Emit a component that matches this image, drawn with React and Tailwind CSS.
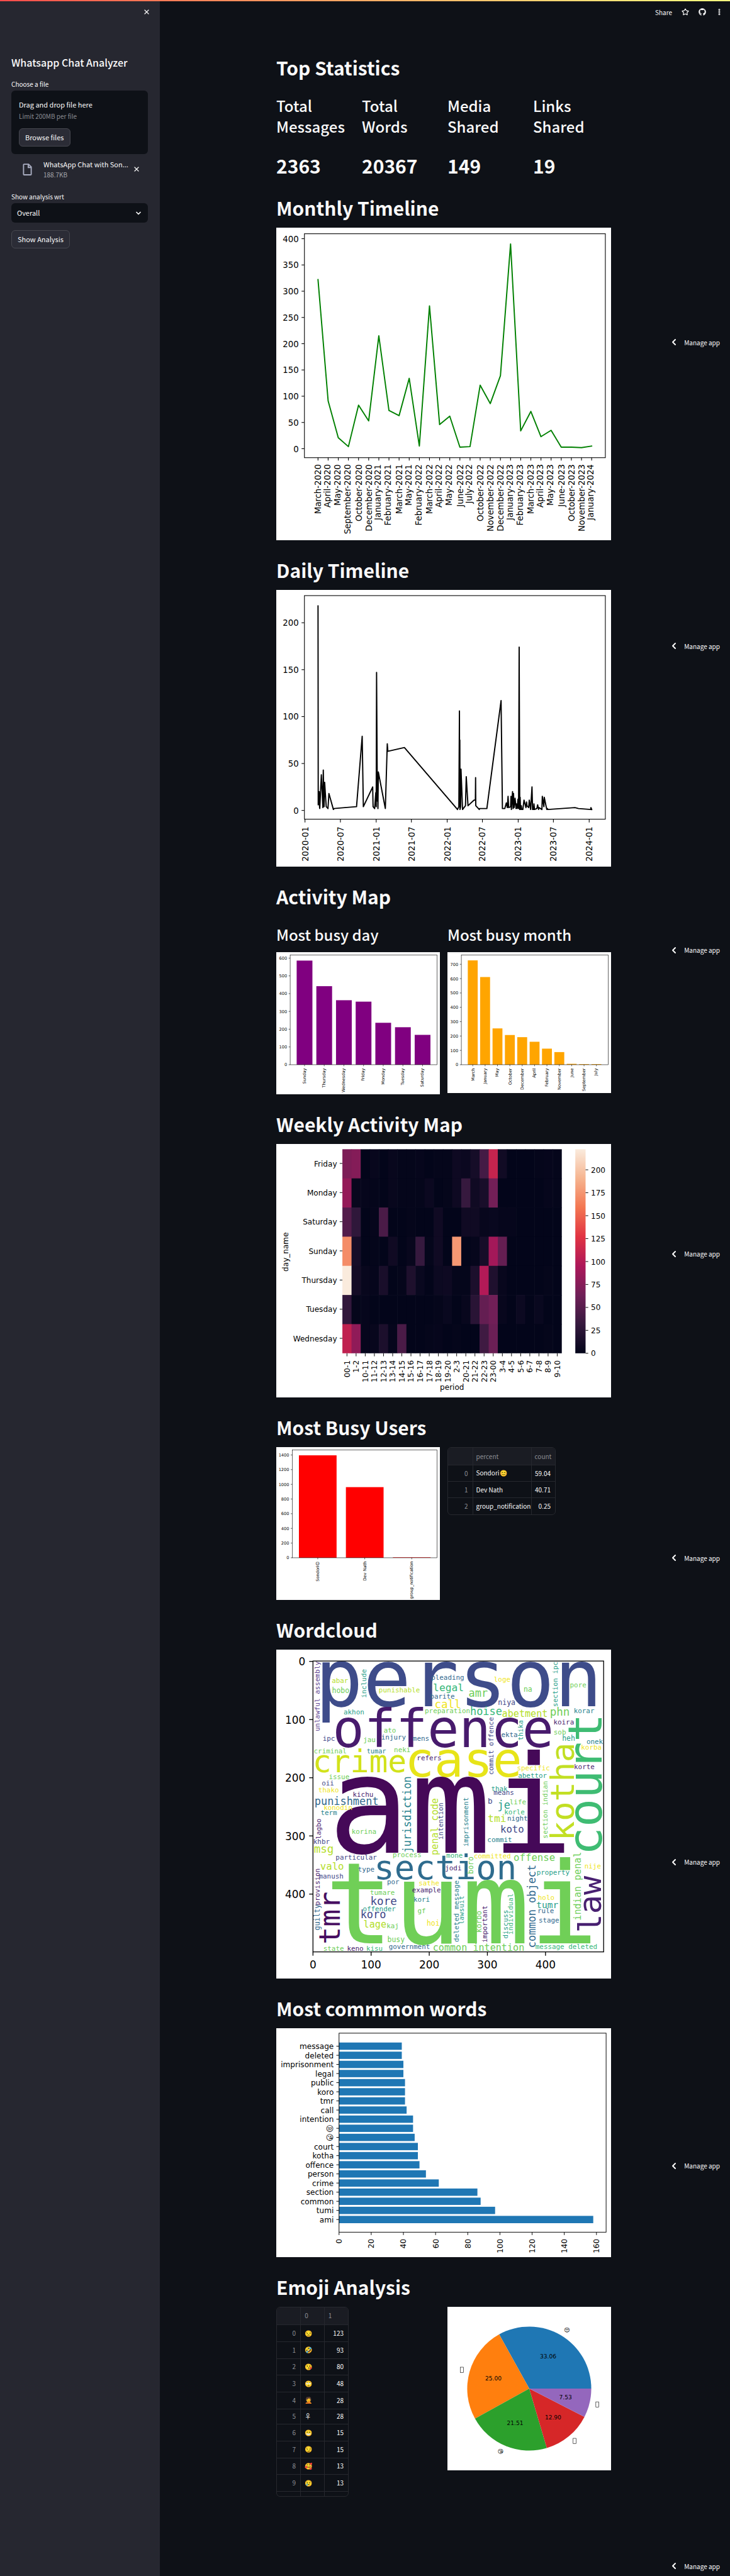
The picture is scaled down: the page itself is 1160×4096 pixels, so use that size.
import { X, Star, ChevronDown, ChevronLeft, EllipsisVertical } from "lucide-react";
import { FaGithub } from "react-icons/fa";

const hasDescender = (s) => /[gjpqy_]/.test(String(s));

function Figure({ label, width, height, children }) {
  return (
    <svg
      role="img"
      aria-label={label}
      viewBox={`0 0 ${width} ${height}`}
      className="block h-auto w-full bg-white font-['DejaVu_Sans',sans-serif]"
    >
      {children}
    </svg>
  );
}

function Frame({ box, w }) {
  return (
    <rect
      x={box.l}
      y={box.t}
      width={box.r - box.l}
      height={box.b - box.t}
      fill="none"
      stroke="#000"
      strokeWidth={w}
    />
  );
}

/* items: [position, text] */
function YTicks({ x, items, len, size, w }) {
  return items.map(([y, text], i) => (
    <g key={i}>
      <path d={`M${x} ${y}h${-len}`} stroke="#000" strokeWidth={w} />
      <text x={x - len * 2} y={y + size * 0.38} fontSize={size} textAnchor="end">
        {text}
      </text>
    </g>
  ));
}

function XTicks({ y, items, len, size, w }) {
  return items.map(([x, text], i) => (
    <g key={i}>
      <path d={`M${x} ${y}v${len}`} stroke="#000" strokeWidth={w} />
      <text
        transform={`translate(${x + size * (hasDescender(text) ? 0.25 : 0.37)} ${y + len * 2.3}) rotate(-90)`}
        fontSize={size}
        textAnchor="end"
      >
        {text}
      </text>
    </g>
  ));
}

const monthly = [
  ["March-2020", 322], ["April-2020", 91], ["May-2020", 21], ["September-2020", 4],
  ["October-2020", 83], ["December-2020", 53], ["January-2021", 215], ["February-2021", 73],
  ["March-2021", 63], ["May-2021", 134], ["February-2022", 5], ["March-2022", 272],
  ["April-2022", 46], ["May-2022", 62], ["June-2022", 3], ["July-2022", 4],
  ["October-2022", 121], ["November-2022", 86], ["December-2022", 139], ["January-2023", 390],
  ["February-2023", 34], ["March-2023", 71], ["April-2023", 23], ["May-2023", 35],
  ["June-2023", 3], ["October-2023", 3], ["November-2023", 2], ["January-2024", 5],
];

function MonthlyChart() {
  const box = { l: 74, r: 865, t: 16, b: 605 };
  const px = (i) => 109.7 + i * 26.64;
  const py = (v) => 581.4 - v * 1.381;
  return (
    <Figure label="Monthly timeline" width={880} height={822}>
      <polyline
        points={monthly.map(([, v], i) => `${px(i)},${py(v)}`).join(" ")}
        fill="none"
        stroke="#008000"
        strokeWidth={3.2}
        strokeLinejoin="round"
        strokeLinecap="square"
      />
      <Frame box={box} w={1.8} />
      <YTicks x={box.l} items={[0, 50, 100, 150, 200, 250, 300, 350, 400].map((v) => [py(v), v])} len={7.5} size={22} w={1.8} />
      <XTicks y={box.b} items={monthly.map(([m], i) => [px(i), m])} len={7.5} size={22} w={1.8} />
    </Figure>
  );
}

/* [days since 2020-01-01, messages] */
const daily = [
  [67, 218], [68, 6], [73, 20], [75, 3], [76, 2], [84, 38], [92, 3], [94, 43], [98, 4], [101, 30],
  [109, 4], [114, 3], [118, 2], [123, 18], [146, 1], [149, 2], [205, 3], [265, 4], [294, 79], [300, 4],
  [348, 25], [350, 4], [358, 2], [364, 19], [366, 4], [368, 147], [372, 10], [373, 30], [375, 2],
  [377, 41], [413, 2], [423, 71], [426, 63], [511, 67], [780, 2], [784, 1], [791, 4], [794, 106],
  [795, 5], [796, 75], [797, 1], [800, 4], [802, 44], [810, 1], [825, 5], [829, 36], [838, 5],
  [869, 11], [876, 11], [877, 35], [878, 5], [896, 1], [897, 2], [935, 2], [1008, 117], [1015, 2],
  [1027, 2], [1035, 8], [1040, 3], [1044, 15], [1047, 3], [1057, 4], [1059, 15], [1061, 1], [1067, 20],
  [1070, 2], [1072, 18], [1075, 3], [1080, 13], [1085, 2], [1087, 7], [1091, 2], [1095, 12],
  [1098, 2], [1101, 174], [1104, 1], [1106, 14], [1108, 1], [1112, 5], [1114, 1], [1120, 1],
  [1126, 11], [1136, 3], [1139, 9], [1141, 5], [1150, 3], [1153, 11], [1160, 1], [1167, 25],
  [1170, 1], [1175, 1], [1177, 7], [1180, 1], [1192, 2], [1196, 6], [1201, 1], [1203, 3], [1218, 1],
  [1220, 15], [1228, 4], [1230, 14], [1243, 1], [1246, 2], [1249, 1], [1388, 3], [1406, 2],
  [1469, 1], [1470, 3], [1474, 1],
];

function DailyChart() {
  const box = { l: 74, r: 865, t: 15, b: 603 };
  const px = (d) => 75.5 + d * 0.5113;
  const py = (v) => 580 - v * 2.468;
  const dates = [
    [0, "2020-01"], [182, "2020-07"], [366, "2021-01"], [547, "2021-07"], [731, "2022-01"],
    [912, "2022-07"], [1096, "2023-01"], [1277, "2023-07"], [1461, "2024-01"],
  ];
  return (
    <Figure label="Daily timeline" width={880} height={728}>
      <polyline
        points={daily.map(([d, v]) => `${px(d)},${py(v)}`).join(" ")}
        fill="none"
        stroke="#000"
        strokeWidth={3.2}
        strokeLinejoin="round"
        strokeLinecap="square"
      />
      <Frame box={box} w={1.8} />
      <YTicks x={box.l} items={[0, 50, 100, 150, 200].map((v) => [py(v), v])} len={7.5} size={22} w={1.8} />
      <XTicks y={box.b} items={dates.map(([d, t]) => [px(d), t])} len={8.5} size={22} w={1.8} />
    </Figure>
  );
}

function BarChart({ label, height, box, color, data, start, pitch, barWidth, unit, ticks }) {
  const cx = (i) => start + i * pitch;
  return (
    <Figure label={label} width={430} height={height}>
      {data.map(([name, v], i) => (
        <rect key={name} x={cx(i) - barWidth / 2} y={box.b - v * unit} width={barWidth} height={v * unit} fill={color} />
      ))}
      <Frame box={box} w={1} />
      <YTicks x={box.l} items={ticks.map((v) => [box.b - v * unit, v])} len={4} size={11} w={1} />
      <XTicks y={box.b} items={data.map(([name], i) => [cx(i), name])} len={4} size={11} w={1} />
    </Figure>
  );
}

const hundreds = [0, 100, 200, 300, 400, 500, 600];

const DayChart = () => (
  <BarChart
    label="Most busy day"
    height={374}
    box={{ l: 36.5, r: 422.5, t: 7.5, b: 296 }}
    color="#800080"
    start={74.3}
    pitch={51.7}
    barWidth={41.4}
    unit={0.4673}
    ticks={hundreds}
    data={[
      ["Sunday", 586], ["Thursday", 442], ["Wednesday", 363], ["Friday", 355],
      ["Monday", 236], ["Tuesday", 211], ["Saturday", 168],
    ]}
  />
);

const MonthChart = () => (
  <BarChart
    label="Most busy month"
    height={371}
    box={{ l: 36.5, r: 422.5, t: 7.5, b: 296 }}
    color="#ffa500"
    start={66.5}
    pitch={32.5}
    barWidth={26}
    unit={0.3774}
    ticks={[...hundreds, 700]}
    data={[
      ["March", 727], ["January", 611], ["May", 253], ["October", 207], ["December", 192],
      ["April", 160], ["February", 112], ["November", 88], ["June", 6], ["September", 4], ["July", 4],
    ]}
  />
);

const UserChart = () => (
  <BarChart
    label="Most busy users"
    height={402}
    box={{ l: 42, r: 422.5, t: 7.5, b: 291 }}
    color="#ff0000"
    start={109}
    pitch={123.5}
    barWidth={99}
    unit={0.1931}
    ticks={[0, 200, 400, 600, 800, 1000, 1200, 1400]}
    data={[["Sondori😊", 1395], ["Dev Nath", 962], ["group_notification", 6]]}
  />
);

const rocket = [
  [3, 5, 26], [53, 25, 62], [112, 31, 87], [173, 23, 89],
  [225, 51, 66], [243, 118, 81], [246, 180, 143], [250, 235, 221],
];

function rocketColor(v) {
  const t = Math.min(v / 222, 1) * 7;
  const i = Math.min(Math.floor(t), 6);
  const mix = rocket[i].map((c, k) => Math.round(c + (rocket[i + 1][k] - c) * (t - i)));
  return `rgb(${mix.join(",")})`;
}

const periods = [
  "00-1", "1-2", "10-11", "11-12", "12-13", "13-14", "14-15", "15-16", "16-17", "17-18", "18-19",
  "19-20", "2-3", "20-21", "21-22", "22-23", "23-00", "3-4", "4-5", "5-6", "6-7", "7-8", "8-9", "9-10",
];

const heat = [
  ["Friday", [70, 74, 0, 3, 0, 3, 1, 1, 2, 0, 1, 1, 7, 5, 12, 40, 110, 9, 0, 0, 0, 1, 2, 1]],
  ["Monday", [82, 3, 2, 1, 0, 3, 1, 1, 1, 5, 0, 1, 7, 32, 8, 14, 65, 0, 0, 0, 0, 0, 2, 1]],
  ["Saturday", [48, 28, 0, 2, 43, 0, 0, 1, 0, 0, 8, 0, 0, 8, 8, 3, 4, 2, 2, 0, 0, 0, 0, 0]],
  ["Sunday", [170, 12, 0, 1, 0, 8, 0, 3, 32, 1, 8, 0, 176, 0, 2, 12, 90, 57, 0, 0, 0, 0, 0, 0]],
  ["Thursday", [222, 10, 3, 2, 14, 0, 1, 17, 4, 0, 6, 7, 1, 1, 16, 98, 18, 3, 0, 0, 0, 0, 1, 0]],
  ["Tuesday", [30, 1, 2, 0, 0, 0, 0, 0, 0, 0, 1, 4, 0, 3, 24, 57, 64, 3, 0, 6, 0, 4, 0, 0]],
  ["Wednesday", [107, 80, 2, 3, 16, 2, 43, 0, 0, 1, 2, 0, 1, 0, 0, 37, 61, 0, 0, 0, 0, 0, 1, 0]],
];

function HeatMap() {
  const cw = 24.03;
  const ch = 76.67;
  const left = 173.8;
  const top = 13.8;
  const bottom = 550.5;
  return (
    <Figure label="Weekly activity heat map" width={880} height={666}>
      <defs>
        <linearGradient id="rocket" x1="0" y1="1" x2="0" y2="0">
          {rocket.map((c, i) => (
            <stop key={i} offset={i / 7} stopColor={`rgb(${c.join(",")})`} />
          ))}
        </linearGradient>
      </defs>
      {heat.map(([day, row], r) =>
        row.map((v, c) => (
          <rect
            key={day + c}
            x={left + c * cw}
            y={top + r * ch}
            width={cw + (c < 23 ? 1 : 0)}
            height={ch + (r < 6 ? 1 : 0)}
            fill={rocketColor(v)}
          />
        ))
      )}
      <rect x={786} y={top} width={27} height={bottom - top} fill="url(#rocket)" />
      <YTicks x={left} items={heat.map(([day], r) => [top + (r + 0.5) * ch - 1, day])} len={7} size={20} w={1.6} />
      <XTicks y={bottom} items={periods.map((p, c) => [left + (c + 0.5) * cw, p])} len={8} size={20} w={1.6} />
      {[0, 25, 50, 75, 100, 125, 150, 175, 200].map((v) => (
        <g key={v}>
          <path d={`M813 ${bottom - v * 2.413}h7`} stroke="#000" strokeWidth={1.6} />
          <text x={827} y={bottom - v * 2.413 + 7.6} fontSize={20}>{v}</text>
        </g>
      ))}
      <text x={462} y={647} fontSize={20} textAnchor="middle">period</text>
      <text transform="translate(31 284) rotate(-90)" fontSize={20} textAnchor="middle">day_name</text>
    </Figure>
  );
}

const NAVY = "#404688";
const PLUM = "#481b6d";
const BLUE = "#31688e";
const SEA = "#26828e";
const TEAL = "#1f9e89";
const GREEN = "#35b779";
const LEAF = "#6ece58";
const LIME = "#b5de2b";
const GOLD = "#efe51c";

/* [text, ink start x, baseline y, ink end x, colour] */
const acrossWords = [
  ["person", 247, 377, 1450, "#3e4c8a"],
  ["offence", 306, 552, 1246, "#481b6d"],
  ["crime", 217, 662, 607, "#d2e21b"],
  ["case", 628, 679, 1108, "#e7e419"],
  ["ami", 308, 1008, 1310, "#450958"],
  ["section", 487, 1119, 1090, "#2f6c8e"],
  ["tumi", 289, 1395, 1423, "#70cf57"],
  ["abar", 290, 278, 359, LIME],
  ["hobo", 292, 320, 364, LEAF],
  ["punishable", 497, 318, 675, LIME],
  ["pleading", 727, 264, 868, BLUE],
  ["legal", 735, 312, 867, GREEN],
  ["barite", 722, 345, 828, BLUE],
  ["call", 743, 385, 851, GOLD],
  ["preparation", 699, 408, 893, LEAF],
  ["amr", 891, 338, 970, LEAF],
  ["loge", 1001, 273, 1069, GOLD],
  ["niya", 1020, 373, 1090, NAVY],
  ["na", 1132, 315, 1166, LEAF],
  ["pore", 1335, 296, 1404, LEAF],
  ["korar", 1352, 406, 1439, SEA],
  ["phn", 1249, 417, 1328, LEAF],
  ["abetment", 1037, 422, 1235, LIME],
  ["hoise", 899, 415, 1034, GREEN],
  ["akhon", 342, 412, 429, TEAL],
  ["ato", 518, 490, 569, LEAF],
  ["injury", 508, 521, 612, BLUE],
  ["mens", 646, 527, 714, BLUE],
  ["ipc", 251, 525, 300, NAVY],
  ["jau", 428, 532, 478, LEAF],
  ["ekta", 1034, 509, 1103, BLUE],
  ["koira", 1263, 455, 1350, PLUM],
  ["sob", 1264, 499, 1314, LEAF],
  ["heh", 1301, 527, 1353, TEAL],
  ["onek", 1407, 540, 1476, SEA],
  ["korba", 1384, 564, 1470, GOLD],
  ["korte", 1353, 647, 1440, PLUM],
  ["criminal", 212, 580, 352, LEAF],
  ["tumar", 443, 580, 527, SEA],
  ["neki", 564, 575, 633, LEAF],
  ["refers", 664, 610, 768, PLUM],
  ["specific", 1103, 652, 1243, GOLD],
  ["abettor", 1107, 686, 1229, TEAL],
  ["issue", 278, 690, 365, LEAF],
  ["oii", 246, 717, 296, NAVY],
  ["thako", 231, 748, 317, GOLD],
  ["kichu", 383, 767, 470, PLUM],
  ["punishment", 217, 801, 493, BLUE],
  ["konodin", 255, 822, 379, GOLD],
  ["term", 241, 845, 311, SEA],
  ["thak", 989, 743, 1057, TEAL],
  ["means", 1000, 757, 1087, NAVY],
  ["b", 975, 795, 991, NAVY],
  ["je", 1018, 817, 1068, TEAL],
  ["life", 1070, 800, 1139, LEAF],
  ["korle", 1047, 842, 1134, GREEN],
  ["night", 1060, 870, 1146, BLUE],
  ["tmi", 975, 875, 1051, LIME],
  ["koto", 1031, 921, 1129, NAVY],
  ["commit", 973, 960, 1078, SEA],
  ["korina", 378, 927, 482, LEAF],
  ["khbr", 210, 970, 277, NAVY],
  ["msg", 214, 1006, 295, LIME],
  ["particular", 308, 1036, 484, NAVY],
  ["process", 558, 1026, 681, LEAF],
  ["mone", 793, 1028, 862, GREEN],
  ["committed", 914, 1030, 1073, GOLD],
  ["offense", 1088, 1041, 1263, LEAF],
  ["valo", 240, 1081, 338, LIME],
  ["type", 405, 1089, 473, BLUE],
  ["manush", 234, 1118, 340, NAVY],
  ["jodi", 787, 1083, 856, PLUM],
  ["por", 533, 1141, 583, BLUE],
  ["property", 1189, 1101, 1330, TEAL],
  ["nije", 1399, 1073, 1468, GOLD],
  ["sathe", 672, 1146, 759, GOLD],
  ["example", 643, 1178, 766, PLUM],
  ["tumare", 458, 1188, 562, LEAF],
  ["kore", 462, 1232, 570, NAVY],
  ["kori", 649, 1218, 717, SEA],
  ["holo", 1195, 1210, 1264, GOLD],
  ["tumr", 1188, 1245, 1280, TEAL],
  ["offender", 426, 1258, 566, TEAL],
  ["koro", 418, 1288, 525, NAVY],
  ["gf", 667, 1266, 699, LEAF],
  ["rule", 1193, 1267, 1262, BLUE],
  ["stage", 1198, 1308, 1284, BLUE],
  ["lage", 430, 1327, 526, LIME],
  ["kaj", 531, 1331, 580, LEAF],
  ["hoi", 707, 1319, 758, GOLD],
  ["busy", 535, 1391, 605, LEAF],
  ["state", 254, 1428, 340, LEAF],
  ["keno", 358, 1428, 427, PLUM],
  ["kisu", 442, 1428, 511, GREEN],
  ["government", 541, 1421, 717, BLUE],
  ["common intention", 735, 1427, 1138, LEAF],
  ["message deleted", 1184, 1420, 1450, GREEN],
];

/* [text, baseline x, ink bottom y, ink top y, colour] */
const upWords = [
  ["unlawful assembly", 234, 482, 187, "#5b3f8f"],
  ["include", 440, 339, 218, TEAL],
  ["section ipc", 1277, 377, 187, TEAL],
  ["thika", 1126, 523, 438, TEAL],
  ["commit offence", 998, 669, 425, NAVY],
  ["kotha", 1349, 943, 543, "#c2df23"],
  ["court", 1472, 1000, 422, "#3fbc73"],
  ["jurisdiction", 635, 1005, 683, SEA],
  ["penal code", 753, 1014, 770, LIME],
  ["intention", 776, 948, 793, NAVY],
  ["imprisonment", 887, 978, 771, SEA],
  ["section indian", 1234, 943, 700, LEAF],
  ["lagbo", 241, 947, 861, PLUM],
  ["boro", 910, 1095, 1025, LEAF],
  ["indian penal", 1380, 1294, 1003, LEAF],
  ["law", 1469, 1343, 1114, "#482071"],
  ["common object", 1183, 1411, 1060, BLUE],
  ["provision", 234, 1230, 1074, PLUM],
  ["guilty", 234, 1337, 1232, BLUE],
  ["tmr", 325, 1393, 1182, "#470e61"],
  ["deleted message", 844, 1388, 1130, SEA],
  ["lawsuit", 866, 1313, 1194, TEAL],
  ["korbo", 945, 1347, 1260, LEAF],
  ["important", 970, 1390, 1237, PLUM],
  ["discuss", 1060, 1373, 1254, TEAL],
  ["individual", 1083, 1356, 1186, GREEN],
];

const cloudX = (x) => (x - 45) * 0.5995;
const cloudY = (y) => (y - 134) * 0.6122;
const bearing = (text) => (/^[aotlfjv]/.test(text) ? 0.06 : 0.09);
const monoSize = (text, extent) => Math.round(extent / (text.length * 0.602 - bearing(text) - 0.065));

function WordCloud() {
  const box = { l: 96.5, r: 860.5, t: 30, b: 795 };
  const ticks = [0, 100, 200, 300, 400];
  return (
    <Figure label="Word cloud" width={880} height={865}>
      <g className="font-['DejaVu_Sans_Mono',monospace]">
        {acrossWords.map(([text, x0, y, x1, fill]) => {
          const size = monoSize(text, (x1 - x0) * 0.5995);
          return (
            <text key={text} x={cloudX(x0) - size * bearing(text)} y={cloudY(y)} fontSize={size} fill={fill}>
              {text}
            </text>
          );
        })}
        {upWords.map(([text, x, y0, y1, fill]) => {
          const size = monoSize(text, (y0 - y1) * 0.6122);
          return (
            <text
              key={text}
              transform={`translate(${cloudX(x)} ${cloudY(y0) + size * bearing(text)}) rotate(-90)`}
              fontSize={size}
              fill={fill}
            >
              {text}
            </text>
          );
        })}
      </g>
      <Frame box={box} w={2.2} />
      <YTicks x={box.l} items={ticks.map((v) => [box.t + v * 1.53 + 1, v])} len={10} size={28} w={2.2} />
      {ticks.map((v) => (
        <g key={v}>
          <path d={`M${box.l + v * 1.528} ${box.b}v10`} stroke="#000" strokeWidth={2.2} />
          <text x={box.l + v * 1.528} y={839} fontSize={28} textAnchor="middle">{v}</text>
        </g>
      ))}
    </Figure>
  );
}

const words = [
  ["message", 39], ["deleted", 39], ["imprisonment", 40], ["legal", 40], ["public", 41], ["koro", 41],
  ["tmr", 41], ["call", 42], ["intention", 46], ["😒", 46], ["😘", 47], ["court", 49], ["kotha", 49],
  ["offence", 50], ["person", 54], ["crime", 62], ["section", 86], ["common", 88], ["tumi", 97], ["ami", 158],
];

function WordsChart() {
  const box = { l: 165, r: 867, t: 13, b: 536.5 };
  const cy = (i) => 47.2 + i * 24;
  return (
    <Figure label="Most common words" width={880} height={602}>
      {words.map(([w, v], i) => (
        <rect key={w} x={box.l} y={cy(i) - 9.6} width={v * 4.229} height={19.2} fill="#1f77b4" />
      ))}
      <Frame box={box} w={1.6} />
      <YTicks x={box.l} items={words.map(([w], i) => [cy(i), w])} len={7} size={20} w={1.6} />
      <XTicks y={box.b} items={[0, 20, 40, 60, 80, 100, 120, 140, 160].map((v) => [box.l + v * 4.229, v])} len={7.5} size={20} w={1.6} />
    </Figure>
  );
}

const slices = [
  [123, "33.06", "#1f77b4", "😒"],
  [93, "25.00", "#ff7f0e", null],
  [80, "21.51", "#2ca02c", "😘"],
  [48, "12.90", "#d62728", null],
  [28, "7.53", "#9467bd", null],
];

function PieChart() {
  const cx = 215;
  const cy = 215;
  const at = (f, r) => [cx + r * Math.cos(f * 2 * Math.PI), cy - r * Math.sin(f * 2 * Math.PI)];
  let sum = 0;
  return (
    <Figure label="Emoji shares" width={430} height={430}>
      {slices.map(([n, pct, fill, glyph]) => {
        const a = sum / 372;
        sum += n;
        const b = sum / 372;
        const mid = (a + b) / 2;
        const [x0, y0] = at(a, 163);
        const [x1, y1] = at(b, 163);
        const [tx, ty] = at(mid, 98);
        const [lx, ly] = at(mid, 179);
        const right = Math.cos(mid * 2 * Math.PI) > 0;
        return (
          <g key={pct}>
            <path d={`M${cx} ${cy}L${x0} ${y0}A163 163 0 0 0 ${x1} ${y1}Z`} fill={fill} />
            <text x={tx} y={ty + 5.5} fontSize={15} textAnchor="middle">{pct}</text>
            {glyph ? (
              <text x={lx} y={ly + 5.5} fontSize={15} textAnchor={right ? "start" : "end"}>{glyph}</text>
            ) : (
              <rect x={right ? lx + 1 : lx - 9} y={ly - 7} width={8} height={14} fill="none" stroke="#000" strokeWidth={1} />
            )}
          </g>
        );
      })}
    </Figure>
  );
}

function Title({ children }) {
  return <h1 className="mt-[27px] mb-3 text-[30px]/[40px] font-bold">{children}</h1>;
}

function Stat({ name, value }) {
  return (
    <div>
      <h2 className="text-2xl/[33px] font-medium">{name}</h2>
      <p className="mt-[26px] text-[30px]/[40px] font-bold">{value}</p>
    </div>
  );
}

function ManageApp() {
  return (
    <button type="button" className="flex h-8 items-center gap-2 bg-[#0e1117] pr-4 pl-3 text-[10px]">
      <ChevronLeft className="size-4" strokeWidth={3} />
      Manage app
    </button>
  );
}

function Sidebar() {
  return (
    <aside className="w-[254px] shrink-0 bg-[#262730] pr-[19px] pl-[18px]">
      <div className="flex h-[34px] items-center justify-end">
        <button type="button" aria-label="Close sidebar" className="-mr-1">
          <X className="size-3" strokeWidth={2.4} />
        </button>
      </div>
      <h1 className="mt-[52px] text-base/[22px] font-medium">Whatsapp Chat Analyzer</h1>

      <div className="mt-[14px]">
        <label htmlFor="chat-file" className="block text-[10px]/[20px]">Choose a file</label>
        <input id="chat-file" type="file" className="sr-only" />
        <div className="flex h-[101px] flex-col items-start justify-center rounded-md bg-[#0e1117] px-3">
          <p className="text-[11px]/[19px]">Drag and drop file here</p>
          <p className="text-[10px]/[18px] text-[#8a8c92]">Limit 200MB per file</p>
          <button type="button" className="mt-[10px] h-[29px] rounded-md border border-[#46474f] bg-[#2b2c36] px-[9px] text-[11px]">
            Browse files
          </button>
        </div>
        <div className="mt-2 flex items-center pr-3 pl-[18px]">
          <svg viewBox="0 0 16 20" className="h-[19px] w-[15px] shrink-0" fill="none" stroke="#a9adc1" strokeWidth="2">
            <path d="M2.5 1h7.5l4.5 4.5V18a1 1 0 0 1-1 1h-11a1 1 0 0 1-1-1V2a1 1 0 0 1 1-1z" />
            <path d="M9.5 1v5.5h5.5" />
          </svg>
          <div className="ml-[18px] min-w-0 flex-1">
            <p className="text-[11px]/[17px] whitespace-nowrap">WhatsApp Chat with Son...</p>
            <p className="text-[10px]/[15px] text-[#a3a4ab]">188.7KB</p>
          </div>
          <button type="button" aria-label="Remove file" className="ml-1 shrink-0">
            <X className="size-3" strokeWidth={2.4} />
          </button>
        </div>
      </div>

      <label htmlFor="user" className="mt-[18px] block text-[10px]/[20px]">Show analysis wrt</label>
      <div className="relative">
        <select id="user" className="h-[31px] w-full appearance-none rounded-md bg-[#0e1117] px-[9px] text-[11px]">
          <option>Overall</option>
        </select>
        <ChevronDown className="pointer-events-none absolute top-[10px] right-[9px] size-3" strokeWidth={3.5} />
      </div>
      <button type="button" className="mt-3 h-[29px] rounded-md border border-[#46474f] bg-[#2b2c36] px-[9px] text-[11px]">
        Show Analysis
      </button>
    </aside>
  );
}

const cell = "border-[#26282e] px-[9px]";

function UsersTable() {
  return (
    <div className="w-[172px] overflow-hidden rounded-md border border-[#26282e]">
      <table className="w-full table-fixed border-collapse text-[10px]/[12px]">
        <colgroup>
          <col className="w-[39px]" />
          <col />
          <col className="w-[38px]" />
        </colgroup>
        <thead>
          <tr className="h-7 bg-[#1a1c23] text-[#8d8f95]">
            <th className={`${cell} border-r border-b`} />
            <th className="border-r border-b border-[#26282e] px-[5px] text-left font-normal">percent</th>
            <th className="border-b border-[#26282e] px-[5px] text-left font-normal">count</th>
          </tr>
        </thead>
        <tbody>
          {[["Sondori", "59.04"], ["Dev Nath", "40.71"], ["group_notification", "0.25"]].map(([name, share], i) => (
            <tr key={name} className="h-[26px] border-b border-[#26282e] last:border-b-0">
              <th className="border-r border-[#26282e] px-[7px] text-right font-normal text-[#8d8f95]">{i}</th>
              <td className="border-r border-[#26282e] pl-[5px] whitespace-nowrap">
                {name}
                {i === 0 && <span className="ml-px font-['Noto_Color_Emoji']">😊</span>}
              </td>
              <td className="pr-[7px] text-right">{share}</td>
            </tr>
          ))}
        </tbody>
      </table>
    </div>
  );
}

const emojis = [
  ["😒", 123], ["🤣", 93], ["😘", 80], ["🙄", 48], ["🤦", 28], ["♀", 28],
  ["😁", 15], ["😏", 15], ["🥰", 13], ["😢", 13], ["😊", 11],
];

function EmojiTable() {
  return (
    <div className="h-[302px] w-[115px] overflow-hidden rounded-md border border-[#26282e]">
      <table className="h-[320px] w-full table-fixed border-collapse text-[10px]/[12px]">
        <thead>
          <tr className="h-7 bg-[#1a1c23] text-[#8d8f95]">
            <th className={`${cell} border-r border-b`} />
            <th className="border-r border-b border-[#26282e] px-[6px] text-left font-normal">0</th>
            <th className="border-b border-[#26282e] px-[6px] text-left font-normal">1</th>
          </tr>
        </thead>
        <tbody>
          {emojis.map(([glyph, n], i) => (
            <tr key={glyph} className="border-b border-[#26282e]">
              <th className="border-r border-[#26282e] px-[7px] text-right font-normal text-[#8d8f95]">{i}</th>
              <td className="border-r border-[#26282e] px-[6px]">
                {glyph === "♀" ? glyph : <span className="font-['Noto_Color_Emoji']">{glyph}</span>}
              </td>
              <td className="px-[7px] text-right">{n}</td>
            </tr>
          ))}
        </tbody>
      </table>
    </div>
  );
}

export default function App() {
  return (
    <div className="flex min-h-screen flex-col bg-[#0e1117] font-['Noto_Sans_CJK_SC',sans-serif] text-[#fafafa]">
      <div className="h-0.5 bg-linear-to-r from-[#ff4b4b] to-[#fffd80]" />
      <div className="relative flex flex-1">
        <Sidebar />
        <main className="min-w-0 flex-1 pr-1 pb-[100px]">
          <header className="flex h-[34px] items-center justify-end pr-[7px] text-[10px]">
            <button type="button">Share</button>
            <button type="button" aria-label="Star" className="ml-[15px]">
              <Star className="size-3" strokeWidth={2.4} />
            </button>
            <a href="#source" aria-label="Source on GitHub" className="ml-[15px]">
              <FaGithub className="size-3" />
            </a>
            <button type="button" aria-label="More" className="ml-[15px]">
              <EllipsisVertical className="size-3" strokeWidth={4} />
            </button>
          </header>

          <div className="mx-auto max-w-[532px] pt-6">
            <Title>Top Statistics</Title>
            <div className="mt-6 grid grid-cols-4 gap-3">
              <Stat name="Total Messages" value="2363" />
              <Stat name="Total Words" value="20367" />
              <Stat name="Media Shared" value="149" />
              <Stat name="Links Shared" value="19" />
            </div>

            <Title>Monthly Timeline</Title>
            <MonthlyChart />

            <Title>Daily Timeline</Title>
            <DailyChart />

            <Title>Activity Map</Title>
            <div className="mt-6 grid grid-cols-2 items-start gap-3">
              <section>
                <h2 className="mb-3 text-2xl/[33px] font-medium">Most busy day</h2>
                <DayChart />
              </section>
              <section>
                <h2 className="mb-3 text-2xl/[33px] font-medium">Most busy month</h2>
                <MonthChart />
              </section>
            </div>

            <Title>Weekly Activity Map</Title>
            <HeatMap />

            <Title>Most Busy Users</Title>
            <div className="grid grid-cols-2 items-start gap-3">
              <UserChart />
              <UsersTable />
            </div>

            <Title>Wordcloud</Title>
            <WordCloud />

            <Title>Most commmon words</Title>
            <WordsChart />

            <Title>Emoji Analysis</Title>
            <div className="grid grid-cols-2 items-start gap-3">
              <EmojiTable />
              <PieChart />
            </div>
          </div>
        </main>

        <div className="absolute inset-y-0 right-0 flex flex-col justify-between">
          <div className="mt-[526px] flex h-[2932px] flex-col justify-between">
            {[1, 2, 3, 4, 5, 6, 7].map((n) => (
              <ManageApp key={n} />
            ))}
          </div>
          <ManageApp />
        </div>
      </div>
    </div>
  );
}
